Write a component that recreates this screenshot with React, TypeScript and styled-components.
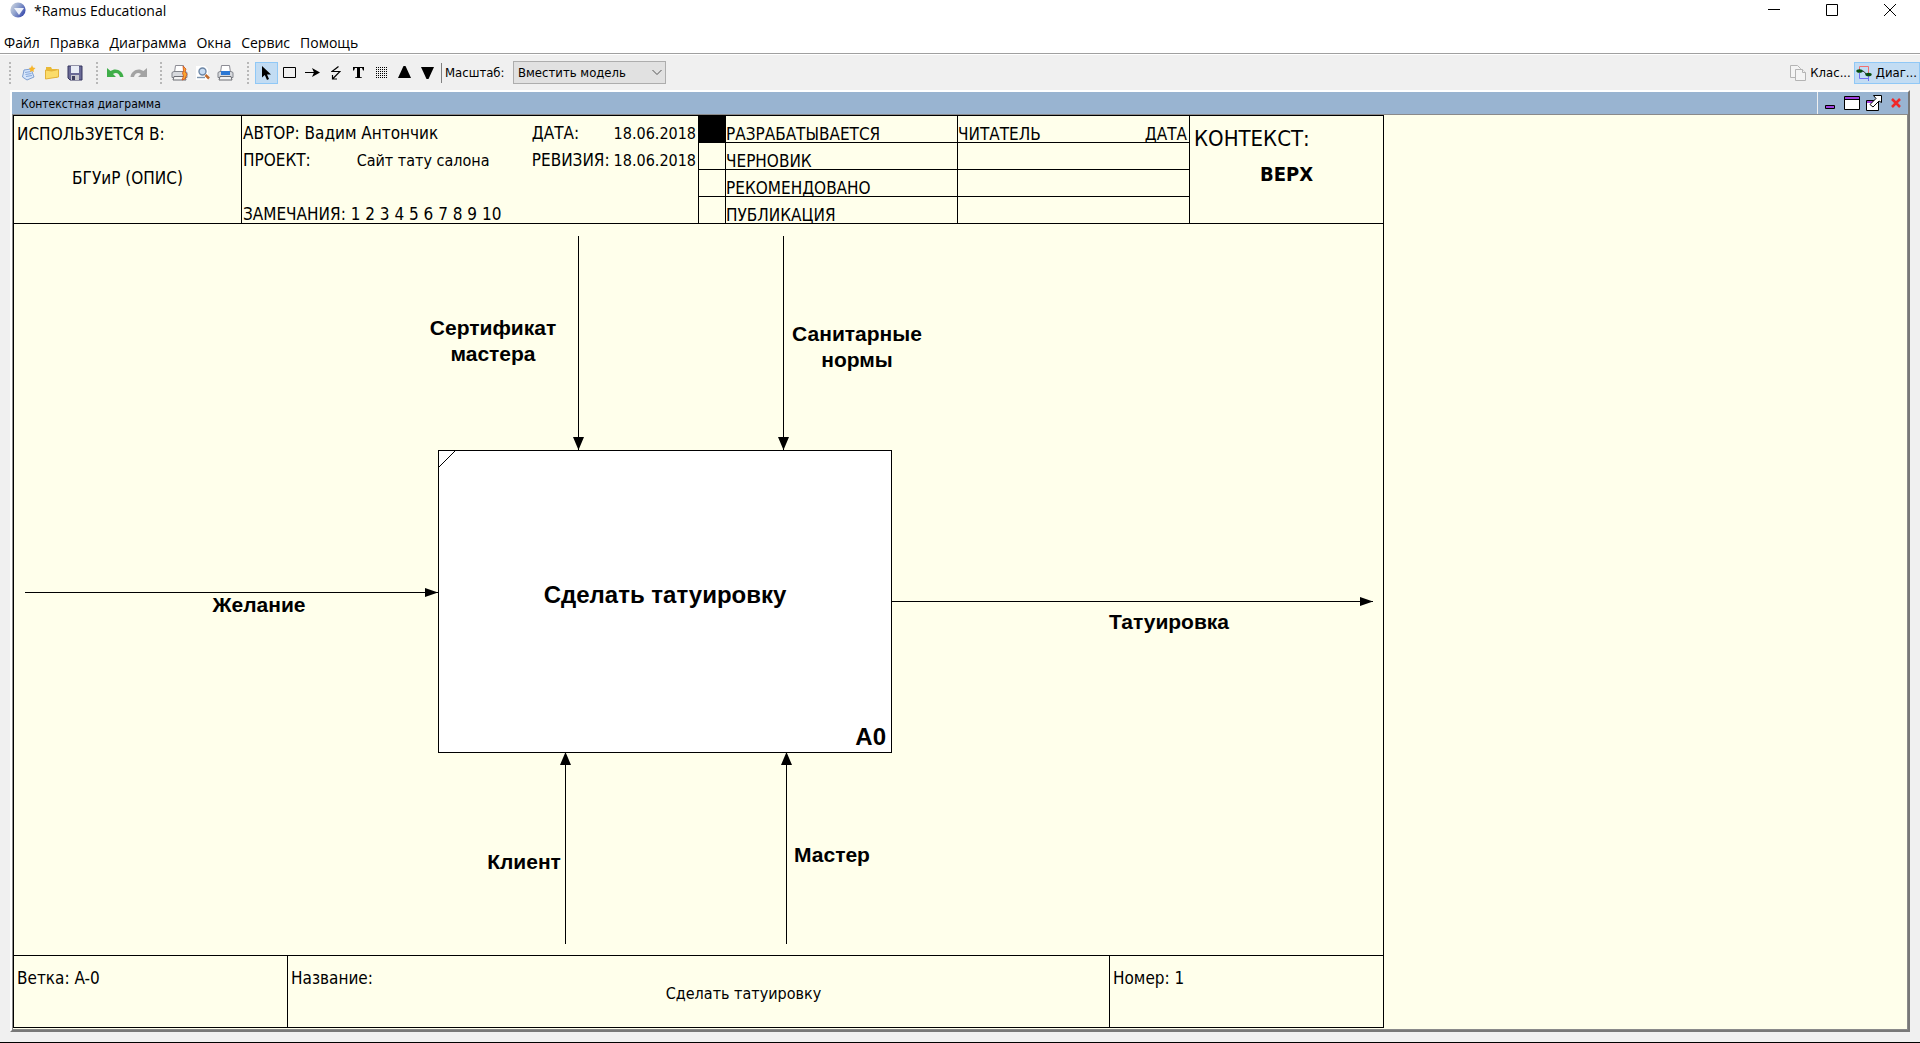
import React from "react";
import styled, { createGlobalStyle, css } from "styled-components";

const ui = `"DejaVu Sans Condensed", "Noto Sans", sans-serif`;
const system = `"Open Sans", "Noto Sans", sans-serif`;
const arial = `"Liberation Sans", Arial, sans-serif`;
const paper = "#ffffeb";

const GlobalStyle = createGlobalStyle`
  *, *::before, *::after { box-sizing: border-box; }
  body { margin: 0; color: #000; background: #f0f0f0; }
  button { font: inherit; color: inherit; border: 0; background: none; padding: 0; margin: 0; }
  svg { display: block; flex: none; }
`;

const Page = styled.div`
  display: flex;
  flex-direction: column;
  height: 100vh;
  border-bottom: 1px solid #000;
  font-family: ${ui};
  font-size: 13px;
`;

const TitleBar = styled.header`
  display: flex;
  align-items: flex-start;
  height: 28px;
  padding: 0 1px 0 10px;
  background: #fff;
  font-family: ${system};
`;

const AppTitle = styled.h1`
  flex: 1;
  display: flex;
  gap: 8px;
  margin: 0;
  font-size: 14px;
  font-weight: 400;
  line-height: 22px;
  svg { margin-top: 2px; }
`;

const WindowButton = styled.button`
  display: grid;
  place-items: center;
  width: 58px;
  height: 20px;
`;

const MenuBar = styled.nav`
  display: flex;
  gap: 10px;
  height: 26px;
  padding-left: 4px;
  background: #fff;
  border-bottom: 1px solid #a0a0a0;
  font-family: ${system};
  font-size: 14px;
`;

const MenuItem = styled.button`
  height: 30px;
  line-height: 30px;
`;

const ToolBar = styled.div`
  display: flex;
  align-items: center;
  height: 36px;
  border-top: 1px solid #fff;
`;

const ToolGroup = styled.div`
  display: flex;
  align-items: center;
  margin-left: 10px;
  &:first-child { margin-left: 9px; }
  &::before {
    content: "";
    width: 2px;
    height: 22px;
    margin-right: 6px;
    background: repeating-linear-gradient(#b8b8b8 0 2px, transparent 2px 4px);
  }
`;

const selected = css`
  background: #c2dcf3;
  border: 1px solid #90c8f6;
`;

const ToolButton = styled.button<{ $active?: boolean }>`
  display: grid;
  place-items: center;
  width: 23px;
  height: 22px;
  ${(p) => p.$active && selected}
`;

const Separator = styled.span`
  width: 1px;
  height: 20px;
  margin: 0 3px 0 2px;
  background: #808080;
`;

const ScaleLabel = styled.label`
  width: 68px;
  font-size: 13px;
`;

const SelectBox = styled.div`
  position: relative;
  svg {
    position: absolute;
    right: 4px;
    top: 8px;
    pointer-events: none;
  }
`;

const Select = styled.select`
  appearance: none;
  display: block;
  width: 153px;
  height: 23px;
  padding: 0 20px 0 4px;
  border: 1px solid #adadad;
  border-radius: 0;
  background: #e1e1e1;
  color: #000;
  font: 13px ${ui};
`;

const ViewTabs = styled.div`
  display: flex;
  margin-left: auto;
`;

const ViewTab = styled.button<{ $active?: boolean }>`
  display: flex;
  align-items: center;
  gap: 4px;
  height: 22px;
  padding: 0 2px 0 1px;
  font-size: 13px;
  border: 1px solid transparent;
  ${(p) => p.$active && selected}
`;

const Frame = styled.main`
  flex: 1;
  min-height: 0;
  display: flex;
  flex-direction: column;
  margin: 0 10px 10px;
  border: solid;
  border-width: 2px;
  border-color: #fff #787878 #787878 #fff;
`;

const FrameBar = styled.div`
  display: flex;
  align-items: stretch;
  height: 22px;
  background: #99b4d1;
`;

const FrameTitle = styled.h2`
  flex: 1;
  margin: 0;
  padding-left: 9px;
  font-size: 12px;
  font-weight: 400;
  line-height: 24px;
`;

const FrameButtons = styled.div`
  display: flex;
  align-items: center;
  gap: 5px;
  padding: 0 3px 0 4px;
  border-left: 1px solid #f0f0f0;
`;

const FrameButton = styled.button`
  width: 17px;
  height: 17px;
`;

const Workspace = styled.div`
  flex: 1;
  min-height: 0;
  padding-bottom: 1px;
  background: ${paper};
  border: 1px solid #8a8a8a;
`;

const Sheet = styled.article`
  display: grid;
  grid-template-rows: auto minmax(0, 1fr) auto;
  height: 100%;
  max-width: 100%;
  aspect-ratio: 1371 / 913;
  border: 1px solid #000;
  font-size: 17px;
  line-height: 20px;
`;

const SheetHead = styled.header`
  display: grid;
  grid-template-columns: 228fr 457fr 491fr 193fr;
  height: 108px;
  border-bottom: 1px solid #000;
`;

const UsedIn = styled.section`
  padding: 8px 3px;
  border-right: 1px solid #000;
`;

const Centered = styled.p`
  margin: 24px 0 0;
  text-align: center;
`;

const Line = styled.p`
  margin: 0;
`;

const Info = styled.section`
  display: grid;
  grid-template-columns: 1fr auto auto;
  grid-template-rows: 27px 27px 27px 26px;
  column-gap: 4px;
  padding: 0 2px 0 1px;
  line-height: 35px;
  border-right: 1px solid #000;
  white-space: nowrap;
`;

const Value = styled.span`
  font-size: 16px;
`;

const Project = styled(Value)`
  margin-left: 41px;
`;

const Status = styled.table`
  width: 100%;
  height: 107px;
  table-layout: fixed;
  border-collapse: separate;
  border-spacing: 0;
`;

const StatusCell = styled.td<{ $fill?: boolean }>`
  height: 27px;
  padding: 6px 2px 0 0;
  line-height: 20px;
  text-align: left;
  vertical-align: bottom;
  white-space: nowrap;
  background: ${(p) => (p.$fill ? "#000" : "transparent")};
  border: solid #000;
  border-width: 0 1px 1px 0;
`;

const StatusRow = styled.tr`
  &:last-child ${StatusCell} {
    height: 26px;
    border-bottom: 0;
  }
`;

const Spread = styled.span`
  display: flex;
  justify-content: space-between;
`;

const StatusText = styled.span`
  display: block;
  height: 18px;
`;

const Context = styled.section`
  padding: 9px 4px;
  font-size: 22px;
  line-height: 28px;
`;

const Parent = styled.p`
  margin: 7px 0 0;
  text-align: center;
  font-weight: 700;
  font-size: 20px;
  line-height: 28px;
`;

const Diagram = styled.section`
  position: relative;
  font-family: ${arial};
  font-weight: 700;
`;

const Arrows = styled.svg`
  position: absolute;
  inset: 0;
  width: 100%;
  height: 100%;
`;

const Activity = styled.div`
  position: absolute;
  display: grid;
  place-items: center;
  padding-bottom: 14px;
  border: 1px solid #000;
  background: #fff;
  font-size: 24px;
  line-height: 28px;
`;

const Corner = styled.svg`
  position: absolute;
  left: 0;
  top: 0;
`;

const NodeNumber = styled.span`
  position: absolute;
  right: 5px;
  bottom: 1px;
`;

const ArrowLabel = styled.span`
  position: absolute;
  transform: translate(-50%, -50%);
  font-size: 21px;
  line-height: 26px;
  text-align: center;
  white-space: pre;
`;

const SheetFoot = styled.footer`
  display: grid;
  grid-template-columns: 273fr 822fr 274fr;
  height: 72px;
  border-top: 1px solid #000;
`;

const FootCell = styled.div`
  display: flex;
  gap: 8px;
  padding: 12px 3px 0;
  & + & { border-left: 1px solid #000; }
`;

const FootTitle = styled.p`
  flex: 1;
  margin: 16px 0 0;
  font-size: 16px;
  text-align: center;
`;

const W = 1369;
const H = 731;
const px = (v: number) => `${(v / W) * 100}%`;
const py = (v: number) => `${(v / H) * 100}%`;

const labels = [
  { text: "Сертификат\nмастера", x: 479, y: 117 },
  { text: "Санитарные\nнормы", x: 843, y: 123 },
  { text: "Желание", x: 245, y: 381 },
  { text: "Татуировка", x: 1155, y: 398 },
  { text: "Клиент", x: 510, y: 638 },
  { text: "Мастер", x: 818, y: 631 },
];

const statuses = ["РАЗРАБАТЫВАЕТСЯ", "ЧЕРНОВИК", "РЕКОМЕНДОВАНО", "ПУБЛИКАЦИЯ"];

const AppIcon = () => (
  <svg width="16" height="16" viewBox="0 0 16 16">
    <defs>
      <linearGradient id="ball" x1="0" y1="0" x2="1" y2="0.6">
        <stop offset="0" stopColor="#d5dbe2" />
        <stop offset="0.5" stopColor="#93a5cf" />
        <stop offset="1" stopColor="#3d4fae" />
      </linearGradient>
    </defs>
    <circle cx="8" cy="8" r="7.6" fill="url(#ball)" />
    <path d="M4 6h10l-5 7z" fill="#eef2fa" />
  </svg>
);

const NewIcon = () => (
  <svg width="16" height="16" viewBox="0 0 16 16">
    <path d="M3 5l7-1 3 8-7 3-4.500-3z" fill="#d6e5fa" stroke="#7f9fd0" />
    <path d="M4 7.500l6-1M4.500 9.500l6-1M5 11.500l6-1" stroke="#86a8dc" />
    <path d="M11 0l1 2.500 2.500.5-2 2 .5 2-2-1-2 1 .3-2L8 3l2-.5z" fill="#f7b52a" />
  </svg>
);
const FolderIcon = () => (
  <svg width="16" height="16" viewBox="0 0 16 16">
    <path d="M2 2h5l1 2h5v9H2z" fill="#e9b935" />
    <path d="M1.500 14V5l6 1 7-1.500V12z" fill="#fbdc6a" stroke="#e3b23a" />
  </svg>
);
const SaveIcon = () => (
  <svg width="16" height="16" viewBox="0 0 16 16">
    <path d="M1 1h14v14H3l-2-2z" fill="#6a6a96" stroke="#35355e" />
    <path d="M4 1h8v7H4z" fill="#e9edf6" />
    <path d="M4 10h8v5H4z" fill="#c8c8cf" />
    <path d="M5 11h3v4H5z" fill="#404060" />
  </svg>
);
const UndoIcon = ({ color, flip }: { color: string; flip?: boolean }) => (
  <svg width="17" height="12" viewBox="0 0 17 12">
    <path
      d="M0 1v9h9L6 7c3-2 6-1 7 3h3.500C16 4 9 0 3.500 4z"
      fill={color}
      transform={flip ? "translate(17 0) scale(-1 1)" : undefined}
    />
  </svg>
);
const PrinterIcon = ({ accent }: { accent?: boolean }) => (
  <svg width="17" height="16" viewBox="0 0 17 16">
    <path d="M4.500.5h8l1 7h-10z" fill="#fff" stroke="#8c8c94" />
    <path d="M1 7.500l2-1h11l2 1v5H1z" fill="#d7d9dd" stroke="#82858c" />
    <path d="M3 11.500h11l1 3.500H2z" fill="#f4f4f4" stroke="#6c6e74" />
    {accent ? (
      <path d="M12 1l3 3-1 3 2 2-2 5-3 1 1.500-4-1-3 1-2z" fill="#f9a52e" stroke="#d0501d" strokeWidth="0.800" />
    ) : (
      <path d="M4 6h9v4H4z" fill="#2c78d4" />
    )}
  </svg>
);
const PreviewIcon = () => (
  <svg width="16" height="16" viewBox="0 0 16 16">
    <path d="M1 1h9l3 3v11H1z" fill="#fff" />
    <circle cx="7.500" cy="6.500" r="3.500" fill="#c8dcf2" stroke="#6e87a6" strokeWidth="1.400" />
    <path d="M2 12.500h8" stroke="#7c93ad" strokeWidth="1.400" />
    <path d="M10.500 10l3.500 3.500" stroke="#c06a2c" strokeWidth="2.500" />
  </svg>
);

const CursorIcon = () => (
  <svg width="11" height="16" viewBox="0 0 11 16">
    <path d="M1 1v11.500l2.800-2.500L6 15l2-1-2-4.500h4z" />
  </svg>
);
const RectIcon = () => (
  <svg width="13" height="11" viewBox="0 0 13 11">
    <path d="M.5.5h12v10H.5z" fill="none" stroke="#000" />
  </svg>
);
const ArrowIcon = () => (
  <svg width="15" height="9" viewBox="0 0 15 9">
    <path d="M0 4h10v1H0zM7 0l8 4.500L7 9l2-4.500z" />
  </svg>
);
const SquiggleIcon = () => (
  <svg width="10" height="14" viewBox="0 0 10 14">
    <path d="M7.500.5L1 5.500h8L2 12.500M1.500 9v4H6" fill="none" stroke="#000" strokeWidth="1.200" />
  </svg>
);
const TextIcon = () => (
  <svg width="13" height="13" viewBox="0 0 13 13">
    <path d="M1 1h11v3.500h-1L10 2H8v9l2 .5v.5H3v-.5l2-.5V2H3L2 4.500H1z" />
  </svg>
);
const GridIcon = () => (
  <svg width="11" height="11" viewBox="0 0 11 11" shapeRendering="crispEdges">
    {[0, 2, 4, 6, 8, 10].map((y) => (
      <path key={y} d={`M0 ${y + 0.5}h11`} stroke="#000" strokeDasharray="1 1" />
    ))}
  </svg>
);
const TriangleIcon = ({ down }: { down?: boolean }) => (
  <svg width="13" height="13" viewBox="0 0 13 13">
    <path d={down ? "M0 1h13L7.500 13h-2z" : "M0 12h13L7.500 0h-2z"} />
  </svg>
);
const PagesIcon = () => (
  <svg width="16" height="16" viewBox="0 0 16 16" fill="#f4f4f4" stroke="#b4b4b4">
    <path d="M.5.5h7l3 3v9H.5z" />
    <path d="M5.500 4.500h7l3 3v8h-10z" />
    <path d="M12.500 4.500v3h3" />
  </svg>
);
const ModelIcon = () => (
  <svg width="16" height="16" viewBox="0 0 16 16" fill="none">
    <path d="M3.500 5V1.500h9v7" stroke="#f07070" />
    <path d="M3.500 8v5.500h9M12.500 11v5" stroke="#6f6ff0" />
    <path d="M6 6l2 .5L10 9" stroke="#333" />
    <ellipse cx="3.500" cy="6" rx="3.200" ry="1.800" fill="#064d0c" />
    <ellipse cx="12.500" cy="9.500" rx="3.200" ry="1.800" fill="#064d0c" />
  </svg>
);

const App = () => (
  <Page>
    <GlobalStyle />
    <TitleBar>
      <AppTitle>
        <AppIcon />
        *Ramus Educational
      </AppTitle>
      <WindowButton aria-label="Свернуть">
        <svg width="12" height="12"><path d="M0 5.500h12" stroke="#000" /></svg>
      </WindowButton>
      <WindowButton aria-label="Развернуть">
        <svg width="12" height="12"><path d="M.5.5h11v11H.5z" fill="none" stroke="#000" /></svg>
      </WindowButton>
      <WindowButton aria-label="Закрыть">
        <svg width="12" height="12"><path d="M0 0l12 12M12 0L0 12" stroke="#000" /></svg>
      </WindowButton>
    </TitleBar>

    <MenuBar>
      {["Файл", "Правка", "Диаграмма", "Окна", "Сервис", "Помощь"].map((m) => (
        <MenuItem key={m}>{m}</MenuItem>
      ))}
    </MenuBar>

    <ToolBar>
      <ToolGroup>
        <ToolButton aria-label="Создать"><NewIcon /></ToolButton>
        <ToolButton aria-label="Открыть"><FolderIcon /></ToolButton>
        <ToolButton aria-label="Сохранить"><SaveIcon /></ToolButton>
      </ToolGroup>
      <ToolGroup>
        <ToolButton aria-label="Отменить"><UndoIcon color="#3fae49" /></ToolButton>
        <ToolButton aria-label="Повторить"><UndoIcon color="#a3a3a3" flip /></ToolButton>
      </ToolGroup>
      <ToolGroup>
        <ToolButton aria-label="Параметры страницы"><PrinterIcon accent /></ToolButton>
        <ToolButton aria-label="Просмотр"><PreviewIcon /></ToolButton>
        <ToolButton aria-label="Печать"><PrinterIcon /></ToolButton>
      </ToolGroup>
      <ToolGroup>
        <ToolButton $active aria-label="Курсор"><CursorIcon /></ToolButton>
        <ToolButton aria-label="Блок"><RectIcon /></ToolButton>
        <ToolButton aria-label="Стрелка"><ArrowIcon /></ToolButton>
        <ToolButton aria-label="Тильда"><SquiggleIcon /></ToolButton>
        <ToolButton aria-label="Текст"><TextIcon /></ToolButton>
        <ToolButton aria-label="Сетка"><GridIcon /></ToolButton>
        <ToolButton aria-label="Вверх"><TriangleIcon /></ToolButton>
        <ToolButton aria-label="Вниз"><TriangleIcon down /></ToolButton>
      </ToolGroup>
      <Separator />
      <ScaleLabel htmlFor="scale">Масштаб:</ScaleLabel>
      <SelectBox>
        <Select id="scale" defaultValue="fit">
          <option value="fit">Вместить модель</option>
        </Select>
        <svg width="10" height="7"><path d="M.5 1L5 5.500 9.500 1" fill="none" stroke="#555" /></svg>
      </SelectBox>
      <ViewTabs>
        <ViewTab><PagesIcon />Клас...</ViewTab>
        <ViewTab $active><ModelIcon />Диаг...</ViewTab>
      </ViewTabs>
    </ToolBar>

    <Frame>
      <FrameBar>
        <FrameTitle>Контекстная диаграмма</FrameTitle>
        <FrameButtons>
          <FrameButton aria-label="Свернуть окно">
            <svg width="17" height="17"><path d="M3.500 10.500h9v3h-9z" fill="#a040e0" stroke="#000" /></svg>
          </FrameButton>
          <FrameButton aria-label="Развернуть окно">
            <svg width="17" height="17">
              <path d="M.5 1.500h15v13H.5z" fill="#fff" stroke="#000" />
              <path d="M1 2h14v2H1z" fill="#a040e0" />
              <path d="M1 4.500h14" stroke="#000" />
            </svg>
          </FrameButton>
          <FrameButton aria-label="Открепить окно">
            <svg width="17" height="17">
              <path d="M.5 5.500h12v10H.5z" fill="#fff" stroke="#000" />
              <path d="M1 6h11v2H1z" fill="#a040e0" />
              <path d="M7.500.5h8v7l-2.500-1.500-6 6-3-2.500 6-6z" fill="#fff" stroke="#000" />
            </svg>
          </FrameButton>
          <FrameButton aria-label="Закрыть окно">
            <svg width="17" height="17"><path d="M4 4l8 8M12 4l-8 8" stroke="#f02828" strokeWidth="2.500" /></svg>
          </FrameButton>
        </FrameButtons>
      </FrameBar>

      <Workspace>
        <Sheet>
          <SheetHead>
            <UsedIn>
              <Line>ИСПОЛЬЗУЕТСЯ В:</Line>
              <Centered>БГУиР (ОПИС)</Centered>
            </UsedIn>
            <Info>
              <span>АВТОР: Вадим Антончик</span>
              <span>ДАТА:</span>
              <Value>18.06.2018</Value>
              <span>ПРОЕКТ: <Project>Сайт тату салона</Project></span>
              <span>РЕВИЗИЯ:</span>
              <Value>18.06.2018</Value>
              <span /><span /><span />
              <span>ЗАМЕЧАНИЯ: 1 2 3 4 5 6 7 8 9 10</span>
            </Info>
            <Status>
              <colgroup>
                <col style={{ width: `${(27 / 491) * 100}%` }} />
                <col style={{ width: `${(232 / 491) * 100}%` }} />
                <col />
              </colgroup>
              <tbody>
                {statuses.map((s, i) => (
                  <StatusRow key={s}>
                    <StatusCell $fill={i === 0} />
                    <StatusCell><StatusText>{s}</StatusText></StatusCell>
                    <StatusCell>
                      {i === 0 && (
                        <StatusText>
                          <Spread><span>ЧИТАТЕЛЬ</span><span>ДАТА</span></Spread>
                        </StatusText>
                      )}
                    </StatusCell>
                  </StatusRow>
                ))}
              </tbody>
            </Status>
            <Context>
              <Line>КОНТЕКСТ:</Line>
              <Parent>ВЕРХ</Parent>
            </Context>
          </SheetHead>

          <Diagram>
            <Arrows viewBox={`0 0 ${W} ${H}`} preserveAspectRatio="none">
              <g stroke="#000" shapeRendering="crispEdges">
                <path d="M564.500 12v214M769.500 12v214M11 368.500h413M877 377.500h482M551.500 528v192M772.500 528v192" />
              </g>
              <path d="M559 213h11l-5.500 13zM764 213h11l-5.500 13zM411 364v9l13-4.500zM1346 373v9l13-4.500zM546 541h11l-5.500-13zM767 541h11l-5.500-13z" />
            </Arrows>
            <Activity style={{ left: px(424), top: py(226), width: px(454), height: py(303) }}>
              <Corner width="16" height="16"><path d="M0 16L16 0" stroke="#000" /></Corner>
              Сделать татуировку
              <NodeNumber>A0</NodeNumber>
            </Activity>
            {labels.map((l) => (
              <ArrowLabel key={l.text} style={{ left: px(l.x), top: py(l.y) }}>{l.text}</ArrowLabel>
            ))}
          </Diagram>

          <SheetFoot>
            <FootCell>Ветка: A-0</FootCell>
            <FootCell>
              Название:
              <FootTitle>Сделать татуировку</FootTitle>
            </FootCell>
            <FootCell>Номер: 1</FootCell>
          </SheetFoot>
        </Sheet>
      </Workspace>
    </Frame>
  </Page>
);

export default App;
